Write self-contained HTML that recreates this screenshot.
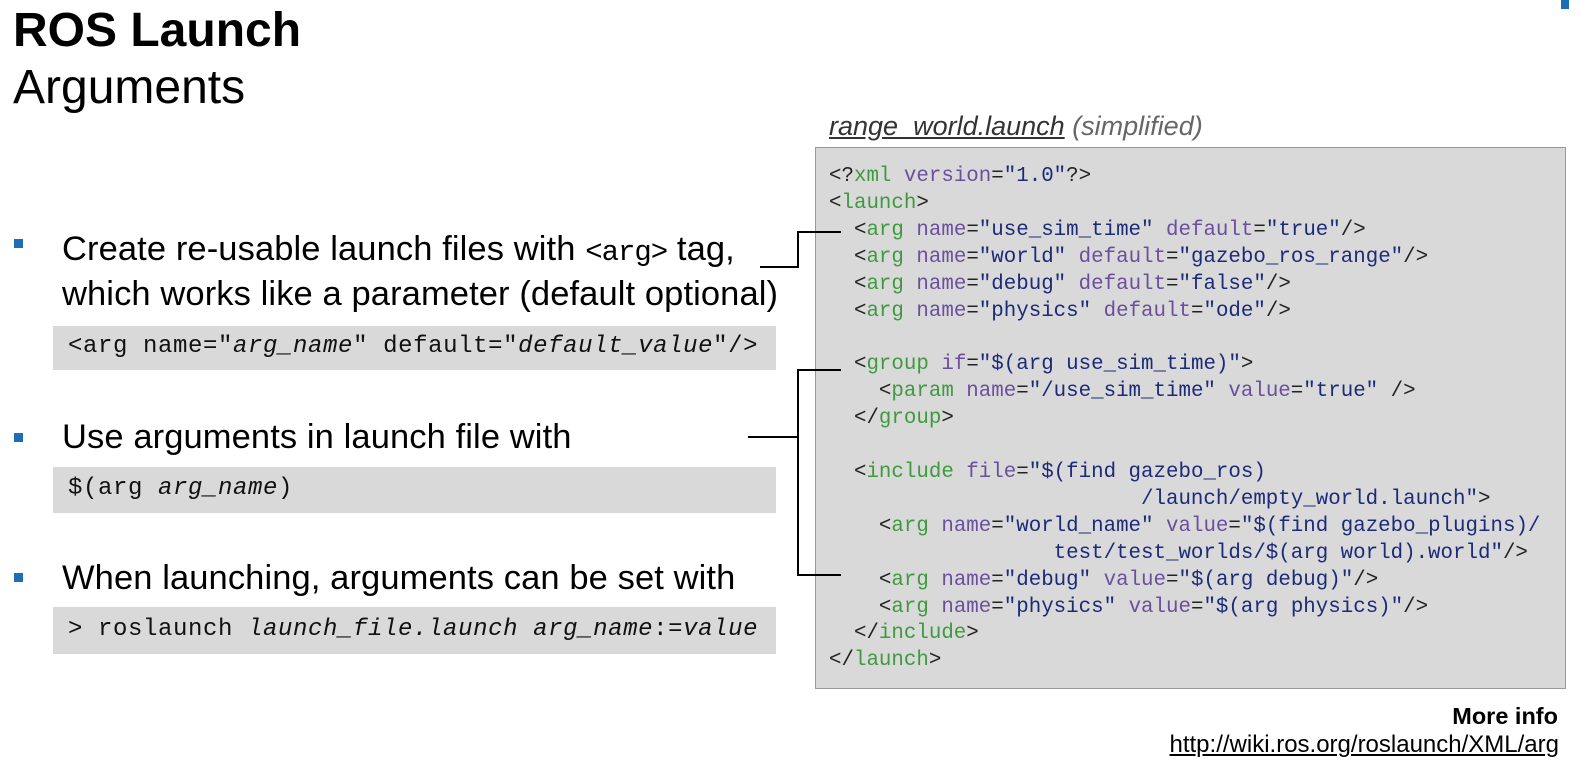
<!DOCTYPE html>
<html><head><meta charset="utf-8"><style>
body{margin:0;width:1579px;height:772px;background:#fff;position:relative;overflow:hidden;font-family:"Liberation Sans",Arial,sans-serif;color:#000}
.a{position:absolute;white-space:pre}
.t{font-weight:bold;font-size:48px;left:13px;top:3px}
.s{font-size:48px;left:13px;top:60px}
.b{font-size:34.5px;left:62px;letter-spacing:0.1px}
.sq{position:absolute;width:9px;height:9px;background:#1f6db5;left:14px}
.g{position:absolute;background:#d9d9d9;left:53px;width:723px}
.m{font-family:"Liberation Mono","DejaVu Sans Mono",monospace}
.c{font-size:24px;left:68px;letter-spacing:0.6px;color:#111}
pre{margin:0}
#code{position:absolute;left:815px;top:147px;width:751px;height:542px;background:#d9d9d9;border:1px solid #999;box-sizing:border-box}
#code pre{position:absolute;left:13px;top:16px;font-family:"Liberation Mono","DejaVu Sans Mono",monospace;font-size:20.8px;line-height:26.9px;color:#222}
.k{color:#3f9a3f}.n{color:#6b4f9e}.v{color:#1c2a78}
.ln{position:absolute;background:#000}
</style></head><body>
<div style="position:absolute;left:1561px;top:0;width:8px;height:9px;background:#1f6db5"></div>
<div class="a t">ROS Launch</div>
<div class="a s">Arguments</div>

<div class="a" style="left:829px;top:111px;font-size:27px;font-style:italic;color:#333"><u>range_world.launch</u> <span style="color:#666">(simplified)</span></div>

<div class="sq" style="top:239px"></div>
<div class="a b" style="top:230px">Create re-usable launch files with <span class="m" style="font-size:29px;letter-spacing:-1px">&lt;arg&gt;</span> tag,</div>
<div class="a b" style="top:275px">which works like a parameter (default optional)</div>
<div class="g" style="top:326px;height:44px"></div>
<div class="a m c" style="top:333px">&lt;arg name="<i>arg_name</i>" default="<i>default_value</i>"/&gt;</div>

<div class="sq" style="top:433px"></div>
<div class="a b" style="top:418px">Use arguments in launch file with</div>
<div class="g" style="top:467px;height:46px"></div>
<div class="a m c" style="top:475px">$(arg <i>arg_name</i>)</div>

<div class="sq" style="top:573px"></div>
<div class="a b" style="top:559px">When launching, arguments can be set with</div>
<div class="g" style="top:607px;height:47px"></div>
<div class="a m c" style="top:616px">&gt; roslaunch <i>launch_file.launch arg_name</i>:=<i>value</i></div>

<div id="code"><pre>&lt;?<span class="k">xml</span> <span class="n">version</span>=<span class="v">"1.0"</span>?&gt;
&lt;<span class="k">launch</span>&gt;
  &lt;<span class="k">arg</span> <span class="n">name</span>=<span class="v">"use_sim_time"</span> <span class="n">default</span>=<span class="v">"true"</span>/&gt;
  &lt;<span class="k">arg</span> <span class="n">name</span>=<span class="v">"world"</span> <span class="n">default</span>=<span class="v">"gazebo_ros_range"</span>/&gt;
  &lt;<span class="k">arg</span> <span class="n">name</span>=<span class="v">"debug"</span> <span class="n">default</span>=<span class="v">"false"</span>/&gt;
  &lt;<span class="k">arg</span> <span class="n">name</span>=<span class="v">"physics"</span> <span class="n">default</span>=<span class="v">"ode"</span>/&gt;

  &lt;<span class="k">group</span> <span class="n">if</span>=<span class="v">"$(arg use_sim_time)"</span>&gt;
    &lt;<span class="k">param</span> <span class="n">name</span>=<span class="v">"/use_sim_time"</span> <span class="n">value</span>=<span class="v">"true"</span> /&gt;
  &lt;/<span class="k">group</span>&gt;

  &lt;<span class="k">include</span> <span class="n">file</span>=<span class="v">"$(find gazebo_ros)</span>
<span class="v">                         /launch/empty_world.launch"</span>&gt;
    &lt;<span class="k">arg</span> <span class="n">name</span>=<span class="v">"world_name"</span> <span class="n">value</span>=<span class="v">"$(find gazebo_plugins)/</span>
<span class="v">                  test/test_worlds/$(arg world).world"</span>/&gt;
    &lt;<span class="k">arg</span> <span class="n">name</span>=<span class="v">"debug"</span> <span class="n">value</span>=<span class="v">"$(arg debug)"</span>/&gt;
    &lt;<span class="k">arg</span> <span class="n">name</span>=<span class="v">"physics"</span> <span class="n">value</span>=<span class="v">"$(arg physics)"</span>/&gt;
  &lt;/<span class="k">include</span>&gt;
&lt;/<span class="k">launch</span>&gt;</pre></div>

<div class="ln" style="left:760px;top:266px;width:38px;height:2px"></div>
<div class="ln" style="left:797px;top:231px;width:2px;height:37px"></div>
<div class="ln" style="left:797px;top:231px;width:44px;height:2px"></div>
<div class="ln" style="left:748px;top:436px;width:50px;height:2px"></div>
<div class="ln" style="left:797px;top:369px;width:2px;height:207px"></div>
<div class="ln" style="left:797px;top:369px;width:44px;height:2px"></div>
<div class="ln" style="left:797px;top:574px;width:44px;height:2px"></div>

<div class="a" style="right:21px;top:703px;font-size:23.5px;font-weight:bold">More info</div>
<div class="a" style="right:20px;top:731px;font-size:24px;text-decoration:underline">http://wiki.ros.org/roslaunch/XML/arg</div>
</body></html>
